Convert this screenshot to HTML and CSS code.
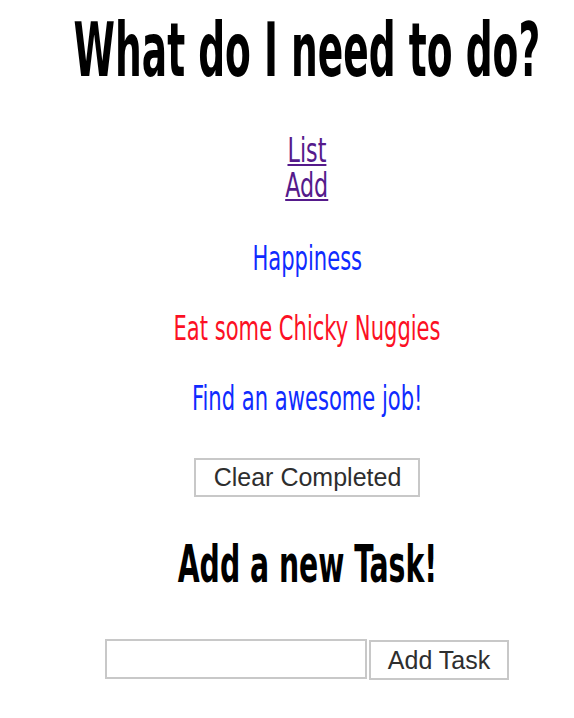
FILE: index.html
```html
<!DOCTYPE html>
<html lang="en">
<head>
<meta charset="utf-8">
<title>What do I need to do?</title>
<link rel="stylesheet" href="styles.css">
</head>
<body>
<div class="page">
  <h1 class="title"><span class="squash-title">What do I need to do?</span></h1>
  <nav class="nav">
    <a class="nav-link" href="#list"><span class="squash-link">List</span></a>
    <a class="nav-link" href="#add"><span class="squash-link">Add</span></a>
  </nav>
  <ul class="tasks">
    <li class="task task-open"><span class="squash">Happiness</span></li>
    <li class="task task-done"><span class="squash">Eat some Chicky Nuggies</span></li>
    <li class="task task-open"><span class="squash">Find an awesome job!</span></li>
  </ul>
  <div class="actions">
    <button class="btn" type="button">Clear Completed</button>
  </div>
  <h2 class="subtitle"><span class="squash-sub">Add a new Task!</span></h2>
  <form class="add-form">
    <input class="task-input" type="text">
    <button class="btn btn-add" type="submit">Add Task</button>
  </form>
</div>
</body>
</html>
```

FILE: styles.css
```css
html, body {
  margin: 0;
  padding: 0;
  background: #ffffff;
}

.page {
  padding: 13px 0 0 40px;
  text-align: center;
  font-family: "DejaVu Sans Condensed", "DejaVu Sans", sans-serif;
  overflow: hidden;
}

.squash,
.squash-title,
.squash-link,
.squash-sub {
  display: inline-block;
  white-space: nowrap;
  flex: none;
}

.squash { transform: scaleX(0.71); }
.squash-title { transform: scaleX(0.557); }
.squash-link {
  transform: scaleX(0.75);
  text-decoration: underline;
  text-decoration-thickness: 2px;
  text-underline-offset: 2px;
}
.squash-sub { transform: scaleX(0.605); }

.title {
  margin: 0;
  display: flex;
  justify-content: center;
  font-size: 75px;
  line-height: 75px;
  font-weight: 700;
  color: #000000;
}

.nav {
  margin-top: 45px;
  display: flex;
  flex-direction: column;
  align-items: center;
}

.nav-link {
  font-size: 33px;
  line-height: 35px;
  color: #551a8b;
  text-decoration: none;
}

.tasks {
  list-style: none;
  margin: 38px 0 0 0;
  padding: 0;
  display: flex;
  flex-direction: column;
  align-items: center;
  gap: 35px;
}

.task {
  display: flex;
  justify-content: center;
  font-size: 33px;
  line-height: 35px;
}

.task-open { color: #0f2bff; }
.task-done { color: #fc1024; }

.actions {
  margin-top: 42px;
  display: flex;
  justify-content: center;
}

.btn {
  box-sizing: border-box;
  height: 39px;
  padding: 0 17px 0 18px;
  border: 2px solid #c8c8c8;
  background: #ffffff;
  color: #2e2e2e;
  font-family: "Liberation Sans", Arial, sans-serif;
  font-size: 25px;
  line-height: 35px;
  white-space: nowrap;
}

.subtitle {
  margin: 41px 0 0 0;
  display: flex;
  justify-content: center;
  font-size: 52px;
  line-height: 52px;
  font-weight: 700;
  color: #000000;
}

.add-form {
  margin-top: 49px;
  display: flex;
  justify-content: center;
  align-items: flex-start;
  gap: 2px;
}

.task-input {
  box-sizing: border-box;
  width: 262px;
  height: 40px;
  margin: 0;
  border: 2px solid #c8c8c8;
  background: #ffffff;
  font-size: 20px;
}

.btn-add {
  height: 40px;
  margin-top: 1px;
  padding: 0 17px;
}
```
